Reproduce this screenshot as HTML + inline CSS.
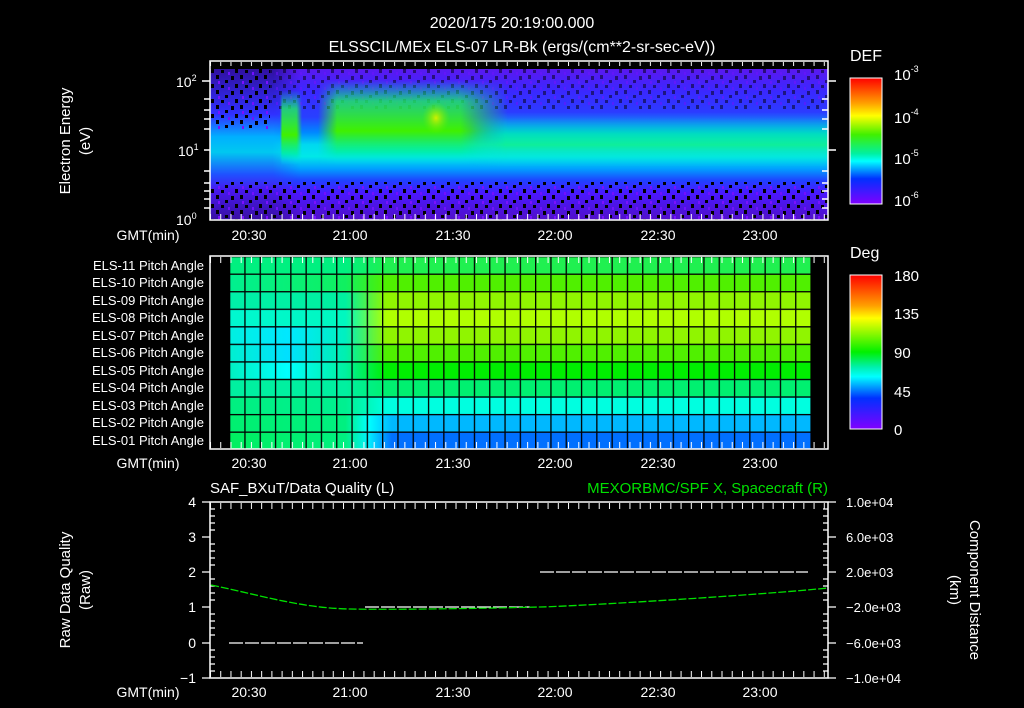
<!DOCTYPE html>
<html><head><meta charset="utf-8"><style>
html,body{margin:0;padding:0;background:#000;width:1024px;height:708px;overflow:hidden}
svg{display:block}
text{font-family:"Liberation Sans",sans-serif;fill:#fff}
</style></head><body>
<svg width="1024" height="708" viewBox="0 0 1024 708" xmlns="http://www.w3.org/2000/svg">
<defs>
<linearGradient id="spv" x1="0" y1="0" x2="0" y2="1">
<stop offset="0" stop-color="#5a18f0"/><stop offset="0.15" stop-color="#3a28ff"/>
<stop offset="0.32" stop-color="#2840ff"/><stop offset="0.42" stop-color="#0088ff"/>
<stop offset="0.5" stop-color="#00d8f0"/><stop offset="0.58" stop-color="#00e8e8"/>
<stop offset="0.66" stop-color="#00a0ff"/><stop offset="0.74" stop-color="#2040ff"/>
<stop offset="0.82" stop-color="#4a18ff"/><stop offset="1" stop-color="#5010c8"/>
</linearGradient>
<linearGradient id="spl" x1="0" y1="0" x2="0" y2="1">
<stop offset="0" stop-color="#3010a0"/><stop offset="0.3" stop-color="#3030ff"/>
<stop offset="0.45" stop-color="#00b0ff"/><stop offset="0.55" stop-color="#00c8f0"/>
<stop offset="0.7" stop-color="#2050ff"/><stop offset="0.8" stop-color="#4818f0"/><stop offset="1" stop-color="#3810a0"/>
</linearGradient>
<linearGradient id="spla" x1="0" y1="0" x2="1" y2="0">
<stop offset="0" stop-color="#fff"/><stop offset="0.7" stop-color="#fff"/><stop offset="1" stop-color="#fff" stop-opacity="0"/>
</linearGradient>
<mask id="mspl"><rect x="210" y="69" width="90" height="151" fill="url(#spla)"/></mask>
<linearGradient id="grn" x1="0" y1="0" x2="0" y2="1">
<stop offset="0" stop-color="#00f0a0" stop-opacity="0"/><stop offset="0.25" stop-color="#20f060" stop-opacity="0.8"/>
<stop offset="0.6" stop-color="#40f000" stop-opacity="1"/><stop offset="0.85" stop-color="#00f0a0" stop-opacity="0.8"/>
<stop offset="1" stop-color="#00e0ff" stop-opacity="0"/>
</linearGradient>
<linearGradient id="hfade" x1="0" y1="0" x2="1" y2="0">
<stop offset="0" stop-color="#fff" stop-opacity="0"/><stop offset="0.1" stop-color="#fff"/>
<stop offset="0.75" stop-color="#fff"/><stop offset="1" stop-color="#fff" stop-opacity="0"/>
</linearGradient>
<mask id="mg1"><rect x="318" y="80" width="190" height="85" fill="url(#hfade)"/></mask>
<mask id="mg2"><rect x="280" y="90" width="22" height="75" fill="url(#hfade)"/></mask>
<mask id="mg3"><rect x="470" y="112" width="358" height="55" fill="url(#hfade2)"/></mask>
<linearGradient id="hfade2" x1="0" y1="0" x2="1" y2="0">
<stop offset="0" stop-color="#fff" stop-opacity="0"/><stop offset="0.1" stop-color="#fff"/><stop offset="1" stop-color="#fff"/>
</linearGradient>
<linearGradient id="band" x1="0" y1="0" x2="0" y2="1">
<stop offset="0" stop-color="#00e0ff" stop-opacity="0"/><stop offset="0.4" stop-color="#00f0b0" stop-opacity="0.8"/>
<stop offset="0.6" stop-color="#10f090" stop-opacity="0.9"/><stop offset="1" stop-color="#00e0ff" stop-opacity="0"/>
</linearGradient>
<radialGradient id="yel"><stop offset="0" stop-color="#d0f000"/><stop offset="1" stop-color="#60f000" stop-opacity="0"/></radialGradient>
<pattern id="speck" width="24" height="15" patternUnits="userSpaceOnUse">
<rect x="0" y="0" width="3" height="4" fill="#000"/><rect x="9" y="5" width="3" height="3" fill="#000"/>
<rect x="15" y="1" width="3" height="4" fill="#000"/><rect x="5" y="10" width="3" height="3" fill="#000"/>
<rect x="19" y="9" width="3" height="4" fill="#000"/><rect x="12" y="12" width="2" height="3" fill="#7010ff"/>
<rect x="2" y="6" width="2" height="3" fill="#7a10ff"/>
</pattern>
<linearGradient id="cb1" x1="0" y1="0" x2="0" y2="1">
<stop offset="0" stop-color="#ff0000"/><stop offset="0.2" stop-color="#ffa000"/><stop offset="0.3" stop-color="#ffff00"/>
<stop offset="0.45" stop-color="#40f000"/><stop offset="0.6" stop-color="#00f0a0"/><stop offset="0.66" stop-color="#00ffff"/>
<stop offset="0.8" stop-color="#0030ff"/><stop offset="1" stop-color="#8000ff"/>
</linearGradient>
<pattern id="tkx" x="210" width="10.23" height="10" patternUnits="userSpaceOnUse"><rect x="0" y="0" width="1" height="10" fill="#fff"/></pattern>
</defs>

<text x="512" y="28" font-size="16" text-anchor="middle">2020/175 20:19:00.000</text>
<text x="522" y="52" font-size="16" text-anchor="middle">ELSSCIL/MEx ELS-07 LR-Bk  (ergs/(cm**2-sr-sec-eV))</text>

<!-- Panel 1 -->
<rect x="210" y="69" width="618" height="151" fill="url(#spv)"/>
<rect x="210" y="69" width="90" height="151" fill="url(#spl)" mask="url(#mspl)"/>
<rect x="210" y="69" width="618" height="40" fill="url(#speck)" opacity="0.5"/>
<rect x="210" y="69" width="60" height="60" fill="url(#speck)"/>
<rect x="210" y="182" width="618" height="38" fill="url(#speck)"/>
<g mask="url(#mg1)"><rect x="318" y="80" width="190" height="85" fill="url(#grn)"/></g>
<g mask="url(#mg2)"><rect x="280" y="90" width="22" height="75" fill="url(#grn)"/></g>
<ellipse cx="436" cy="118" rx="14" ry="16" fill="url(#yel)"/>
<g mask="url(#mg3)"><rect x="470" y="112" width="358" height="55" fill="url(#band)"/></g>
<rect x="210" y="61" width="618" height="159" fill="none" stroke="#fff" stroke-width="1.5"/>
<rect x="210" y="62" width="618" height="4" fill="url(#tkx)"/>
<rect x="210" y="214" width="618" height="6" fill="url(#tkx)"/>
<g stroke="#fff" stroke-width="1.5">
<path d="M202 81h8M204 99h6M204 110h6M204 119h6M204 129h6M204 150h6M204 171h6M204 183h6M204 191h6M204 199h6M204 208h6"/>
<path d="M828 81h8M828 150h8M828 119h-6M828 129h-6M828 171h-6M828 183h-6M828 191h-6M828 199h-6M828 208h-6M828 110h-6M828 99h-6"/>
</g>
<text x="176" y="87" font-size="14">10<tspan font-size="9" dy="-6">2</tspan></text>
<text x="178" y="156" font-size="14">10<tspan font-size="9" dy="-6">1</tspan></text>
<text x="176" y="225" font-size="14">10<tspan font-size="9" dy="-6">0</tspan></text>
<text transform="translate(70,141) rotate(-90)" font-size="15" text-anchor="middle">Electron Energy</text>
<text transform="translate(90,141) rotate(-90)" font-size="15" text-anchor="middle">(eV)</text>
<g font-size="14" text-anchor="middle">
<text x="148" y="240">GMT(min)</text>
<text x="249" y="240">20:30</text><text x="350" y="240">21:00</text><text x="453" y="240">21:30</text>
<text x="555" y="240">22:00</text><text x="658" y="240">22:30</text><text x="760" y="240">23:00</text>
</g>
<text x="850" y="61" font-size="16">DEF</text>
<rect x="850" y="78" width="32" height="126" fill="url(#cb1)" stroke="#fff" stroke-width="1"/>
<text x="894" y="80" font-size="15">10<tspan font-size="9" dy="-8">-3</tspan></text>
<text x="894" y="123" font-size="15">10<tspan font-size="9" dy="-8">-4</tspan></text>
<text x="894" y="164" font-size="15">10<tspan font-size="9" dy="-8">-5</tspan></text>
<text x="894" y="206" font-size="15">10<tspan font-size="9" dy="-8">-6</tspan></text>

<!-- Panel 2 -->
<defs>
<linearGradient id="r0"><stop offset="0" stop-color="#00f080"/><stop offset="0.2" stop-color="#00f080"/><stop offset="0.27" stop-color="#20f050"/><stop offset="1" stop-color="#20f050"/></linearGradient>
<linearGradient id="r1"><stop offset="0" stop-color="#00f090"/><stop offset="0.2" stop-color="#10f060"/><stop offset="0.27" stop-color="#50f000"/><stop offset="1" stop-color="#50f000"/></linearGradient>
<linearGradient id="r2"><stop offset="0" stop-color="#00f0a8"/><stop offset="0.2" stop-color="#00f0a0"/><stop offset="0.27" stop-color="#90f500"/><stop offset="1" stop-color="#90f500"/></linearGradient>
<linearGradient id="r3"><stop offset="0" stop-color="#00f8d0"/><stop offset="0.2" stop-color="#00f8c0"/><stop offset="0.27" stop-color="#b0ff00"/><stop offset="1" stop-color="#b0ff00"/></linearGradient>
<linearGradient id="r4"><stop offset="0" stop-color="#00f0e0"/><stop offset="0.1" stop-color="#00e8ff"/><stop offset="0.2" stop-color="#00f0c0"/><stop offset="0.27" stop-color="#90f500"/><stop offset="1" stop-color="#90f500"/></linearGradient>
<linearGradient id="r5"><stop offset="0" stop-color="#00f0d0"/><stop offset="0.1" stop-color="#00e0ff"/><stop offset="0.2" stop-color="#00f0b0"/><stop offset="0.27" stop-color="#50f000"/><stop offset="1" stop-color="#50f000"/></linearGradient>
<linearGradient id="r6"><stop offset="0" stop-color="#00f0c0"/><stop offset="0.1" stop-color="#00ffff"/><stop offset="0.2" stop-color="#00f0a0"/><stop offset="0.27" stop-color="#00ee00"/><stop offset="1" stop-color="#00ee00"/></linearGradient>
<linearGradient id="r7"><stop offset="0" stop-color="#00f0a0"/><stop offset="0.2" stop-color="#00f0a0"/><stop offset="0.27" stop-color="#00f070"/><stop offset="1" stop-color="#00f070"/></linearGradient>
<linearGradient id="r8"><stop offset="0" stop-color="#00f080"/><stop offset="0.2" stop-color="#00f090"/><stop offset="0.27" stop-color="#00ffe0"/><stop offset="1" stop-color="#00ffe0"/></linearGradient>
<linearGradient id="r9"><stop offset="0" stop-color="#00f070"/><stop offset="0.2" stop-color="#00f080"/><stop offset="0.24" stop-color="#00ffff"/><stop offset="0.28" stop-color="#00b8ff"/><stop offset="1" stop-color="#00b8ff"/></linearGradient>
<linearGradient id="r10"><stop offset="0" stop-color="#00f060"/><stop offset="0.2" stop-color="#00f080"/><stop offset="0.24" stop-color="#00f0ff"/><stop offset="0.28" stop-color="#0070ff"/><stop offset="1" stop-color="#0070ff"/></linearGradient>
<pattern id="gcol" x="229" width="15.3" height="10" patternUnits="userSpaceOnUse"><rect width="1.3" height="10" fill="#000"/></pattern>
<pattern id="grow" y="256" width="10" height="17.55" patternUnits="userSpaceOnUse"><rect width="10" height="1.3" fill="#000"/></pattern>
<linearGradient id="cb2" x1="0" y1="0" x2="0" y2="1">
<stop offset="0" stop-color="#ff0000"/><stop offset="0.2" stop-color="#ffa000"/><stop offset="0.28" stop-color="#ffff00"/>
<stop offset="0.5" stop-color="#00f000"/><stop offset="0.6" stop-color="#00f0b0"/><stop offset="0.66" stop-color="#00ffff"/>
<stop offset="0.8" stop-color="#0030ff"/><stop offset="1" stop-color="#8000ff"/>
</linearGradient>
</defs>
<rect x="229" y="256.0" width="582" height="17.6" fill="url(#r0)"/>
<rect x="229" y="273.5" width="582" height="17.6" fill="url(#r1)"/>
<rect x="229" y="291.1" width="582" height="17.6" fill="url(#r2)"/>
<rect x="229" y="308.6" width="582" height="17.6" fill="url(#r3)"/>
<rect x="229" y="326.2" width="582" height="17.6" fill="url(#r4)"/>
<rect x="229" y="343.7" width="582" height="17.6" fill="url(#r5)"/>
<rect x="229" y="361.3" width="582" height="17.6" fill="url(#r6)"/>
<rect x="229" y="378.8" width="582" height="17.6" fill="url(#r7)"/>
<rect x="229" y="396.4" width="582" height="17.6" fill="url(#r8)"/>
<rect x="229" y="413.9" width="582" height="17.6" fill="url(#r9)"/>
<rect x="229" y="431.5" width="582" height="17.5" fill="url(#r10)"/>
<rect x="229" y="256" width="583" height="193" fill="url(#gcol)"/>
<rect x="229" y="256" width="582" height="193" fill="url(#grow)"/>
<rect x="210" y="256" width="618" height="193" fill="none" stroke="#fff" stroke-width="1.5"/>
<rect x="210" y="257" width="618" height="6" fill="url(#tkx)"/>
<rect x="210" y="442" width="618" height="6" fill="url(#tkx)"/>
<g font-size="13" text-anchor="end">
<text x="204" y="270">ELS-11 Pitch Angle</text><text x="204" y="287">ELS-10 Pitch Angle</text>
<text x="204" y="305">ELS-09 Pitch Angle</text><text x="204" y="322">ELS-08 Pitch Angle</text>
<text x="204" y="340">ELS-07 Pitch Angle</text><text x="204" y="357">ELS-06 Pitch Angle</text>
<text x="204" y="375">ELS-05 Pitch Angle</text><text x="204" y="392">ELS-04 Pitch Angle</text>
<text x="204" y="410">ELS-03 Pitch Angle</text><text x="204" y="427">ELS-02 Pitch Angle</text>
<text x="204" y="445">ELS-01 Pitch Angle</text>
</g>
<g font-size="14" text-anchor="middle">
<text x="148" y="468">GMT(min)</text>
<text x="249" y="468">20:30</text><text x="350" y="468">21:00</text><text x="453" y="468">21:30</text>
<text x="555" y="468">22:00</text><text x="658" y="468">22:30</text><text x="760" y="468">23:00</text>
</g>
<text x="850" y="258" font-size="16">Deg</text>
<rect x="850" y="275" width="32" height="154" fill="url(#cb2)" stroke="#fff" stroke-width="1"/>
<g font-size="15"><text x="894" y="281">180</text><text x="894" y="319">135</text><text x="894" y="358">90</text><text x="894" y="397">45</text><text x="894" y="435">0</text></g>

<!-- Panel 3 -->
<text x="210" y="493" font-size="15">SAF_BXuT/Data Quality (L)</text>
<text x="828" y="493" font-size="15" text-anchor="end" style="fill:#00e000">MEXORBMC/SPF X, Spacecraft (R)</text>
<rect x="210" y="502" width="618" height="176" fill="none" stroke="#fff" stroke-width="1.5"/>
<rect x="210" y="503" width="618" height="6" fill="url(#tkx)"/>
<rect x="210" y="671" width="618" height="6" fill="url(#tkx)"/>
<g stroke="#fff" stroke-width="1.2">
<path d="M202 502h8M202 537h8M202 572h8M202 607h8M202 643h8M202 678h8"/>
<path d="M210 509h5M210 516h5M210 523h5M210 530h5M210 544h5M210 551h5M210 558h5M210 565h5M210 579h5M210 586h5M210 593h5M210 600h5M210 614h5M210 621h5M210 628h5M210 635h5M210 650h5M210 657h5M210 664h5M210 671h5"/>
<path d="M828 502h8M828 537h8M828 572h8M828 607h8M828 643h8M828 678h8"/>
<path d="M828 509h-5M828 516h-5M828 523h-5M828 530h-5M828 544h-5M828 551h-5M828 558h-5M828 565h-5M828 579h-5M828 586h-5M828 593h-5M828 600h-5M828 614h-5M828 621h-5M828 628h-5M828 635h-5M828 650h-5M828 657h-5M828 664h-5M828 671h-5"/>
</g>
<g font-size="14" text-anchor="end"><text x="196" y="507">4</text><text x="196" y="542">3</text><text x="196" y="577">2</text><text x="196" y="612">1</text><text x="196" y="648">0</text><text x="196" y="683">−1</text></g>
<g font-size="13"><text x="846" y="507">1.0e+04</text><text x="846" y="542">6.0e+03</text><text x="846" y="577">2.0e+03</text><text x="846" y="612">−2.0e+03</text><text x="846" y="648">−6.0e+03</text><text x="846" y="683">−1.0e+04</text></g>
<text transform="translate(70,590) rotate(-90)" font-size="15" text-anchor="middle">Raw Data Quality</text>
<text transform="translate(90,590) rotate(-90)" font-size="15" text-anchor="middle">(Raw)</text>
<text transform="translate(970,590) rotate(90)" font-size="15" text-anchor="middle">Component Distance</text>
<text transform="translate(950,590) rotate(90)" font-size="15" text-anchor="middle">(km)</text>
<g stroke="#fff" stroke-width="1.2" stroke-dasharray="14,2">
<path d="M229 643H363M365 607H530M540 572H808"/>
</g>
<path d="M211 585C260 595 300 608 350 609S500 608 540 607S760 595 828 588" fill="none" stroke="#00e000" stroke-width="1.3" stroke-dasharray="8,2"/>
<g font-size="14" text-anchor="middle">
<text x="148" y="697">GMT(min)</text>
<text x="249" y="697">20:30</text><text x="350" y="697">21:00</text><text x="453" y="697">21:30</text>
<text x="555" y="697">22:00</text><text x="658" y="697">22:30</text><text x="760" y="697">23:00</text>
</g>
</svg>
</body></html>
